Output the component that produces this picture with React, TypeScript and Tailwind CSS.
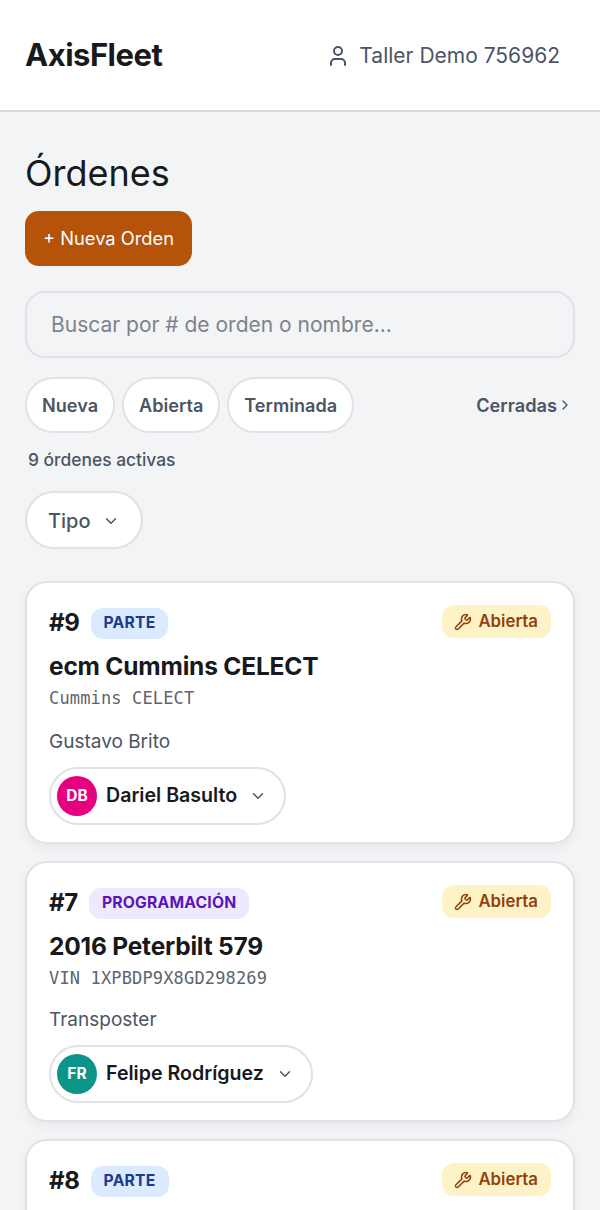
import { ChevronDown, ChevronRight, User, Wrench } from "lucide-react";

const inter = "font-['Inter',sans-serif]";

type Order = {
  num: string;
  tipo: string;
  tipoClass: string;
  title: string;
  sub: string;
  client: string;
  clientGap: string;
  tech: string;
  initials: string;
  avatar: string;
};

const orders: Order[] = [
  {
    num: "#9",
    tipo: "PARTE",
    tipoClass: "bg-[#dbeafe] text-[#1e3a8a]",
    title: "ecm Cummins CELECT",
    sub: "Cummins CELECT",
    client: "Gustavo Brito",
    clientGap: "mt-[19px]",
    tech: "Dariel Basulto",
    initials: "DB",
    avatar: "bg-[#e6007e]",
  },
  {
    num: "#7",
    tipo: "PROGRAMACIÓN",
    tipoClass: "bg-[#ede9fe] text-[#5b13b8]",
    title: "2016 Peterbilt 579",
    sub: "VIN 1XPBDP9X8GD298269",
    client: "Transposter",
    clientGap: "mt-[17px]",
    tech: "Felipe Rodríguez",
    initials: "FR",
    avatar: "bg-[#0d9488]",
  },
  {
    num: "#8",
    tipo: "PARTE",
    tipoClass: "bg-[#dbeafe] text-[#1e3a8a]",
    title: "ecm Cummins CELECT",
    sub: "Cummins CELECT",
    client: "Gustavo Brito",
    clientGap: "mt-[17px]",
    tech: "Dariel Basulto",
    initials: "DB",
    avatar: "bg-[#e6007e]",
  },
];

function OrderCard({ order }: { order: Order }) {
  return (
    <div className="rounded-[22px] border-2 border-[#e0e2e6] bg-white px-[22px] pt-[22px] pb-[17px] shadow-[0_4px_12px_rgba(0,0,0,0.05)]">
      <div className="flex items-start justify-between">
        <div className="flex items-center gap-[11px] h-[32px] mt-[2px]">
          <span className="text-[24px] font-bold text-[#17191c] tracking-[-0.3px]">{order.num}</span>
          <span className={`flex h-[31px] items-center rounded-[12px] px-[13px] text-[15.7px] font-bold tracking-[0.2px] ${order.tipoClass}`}>
            {order.tipo}
          </span>
        </div>
        <span className="flex h-[33px] items-center gap-[6px] rounded-[12px] bg-[#fef3c7] pl-[12px] pr-[13px] text-[16.8px] font-semibold text-[#92400e]">
          <Wrench size={18} strokeWidth={2} />
          Abierta
        </span>
      </div>
      <div className="mt-[10px] text-[24.5px] leading-[34px] font-bold text-[#17191c] tracking-[-0.2px]">{order.title}</div>
      <div className="mt-[3px] font-['DejaVu_Sans_Mono',monospace] text-[17px] leading-[24px] text-[#5f646c] tracking-[0.15px]">{order.sub}</div>
      <div className={`${order.clientGap} text-[19px] leading-[26px] text-[#4b5563]`}>{order.client}</div>
      <div className="mt-[12px] inline-flex h-[58px] items-center rounded-full border-2 border-[#e0e2e6] bg-white pl-[6px] pr-[17px]">
        <span className={`flex h-[40px] w-[40px] items-center justify-center rounded-full text-[15.5px] font-bold text-white ${order.avatar}`}>
          {order.initials}
        </span>
        <span className="ml-[9px] text-[19.6px] font-semibold text-[#17191c]">{order.tech}</span>
        <ChevronDown size={18} strokeWidth={2} className="ml-[12px] text-[#4b5563]" />
      </div>
    </div>
  );
}

export default function App() {
  return (
    <div className={`h-[1210px] overflow-hidden bg-[#f3f4f6] ${inter}`}>
      <header className="flex h-[112px] items-center justify-between border-b-2 border-[#d8dadf] bg-white pl-[25px] pr-[40px]">
        <span className="text-[31px] font-bold tracking-[-0.5px] text-[#17191c]">AxisFleet</span>
        <span className="flex items-center gap-[9px] pt-[1px] text-[21px] text-[#4b5563]">
          <User size={24} strokeWidth={2} />
          Taller Demo 756962
        </span>
      </header>

      <main className="px-[25px]">
        <h1 className="mt-[36px] text-[36px] leading-[50px] font-normal text-[#17191c]">Órdenes</h1>
        <button className="mt-[13px] block h-[55px] w-[167px] rounded-[14px] bg-[#b45309] text-[18.3px] font-normal text-white">
          + Nueva Orden
        </button>

        <div className="mt-[25px] flex h-[67px] items-center rounded-[20px] border-2 border-[#e0e2e6] px-[24px] pt-[1px] text-[21px] text-[#7d828c]">
          Buscar por # de orden o nombre...
        </div>

        <div className="mt-[19px] flex items-center">
          <div className="flex flex-1 gap-[7px]">
            {["Nueva", "Abierta", "Terminada"].map((label) => (
              <span
                key={label}
                className="flex h-[56px] items-center rounded-full border-2 border-[#e0e2e6] bg-white px-[15px] pt-[1px] text-[18.1px] font-semibold text-[#4b5563]"
              >
                {label}
              </span>
            ))}
          </div>
          <span className="flex items-center pr-[2px] pt-[1px] text-[18.2px] font-semibold text-[#4b5563]">
            Cerradas
            <ChevronRight size={16} strokeWidth={2} />
          </span>
        </div>

        <div className="mt-[15px] pl-[3px] text-[17.4px] leading-[24px] font-medium text-[#4b5563]">9 órdenes activas</div>

        <div className="mt-[19px] inline-flex h-[58px] items-center gap-[11px] rounded-full border-2 border-[#e0e2e6] bg-white pl-[21px] pr-[21px] pt-[1px] text-[20px] font-medium text-[#4b5563]">
          Tipo
          <ChevronDown size={18} strokeWidth={2} />
        </div>

        <div className="mt-[32px] flex flex-col gap-[17px]">
          {orders.map((order) => (
            <OrderCard key={order.num} order={order} />
          ))}
        </div>
      </main>
    </div>
  );
}
